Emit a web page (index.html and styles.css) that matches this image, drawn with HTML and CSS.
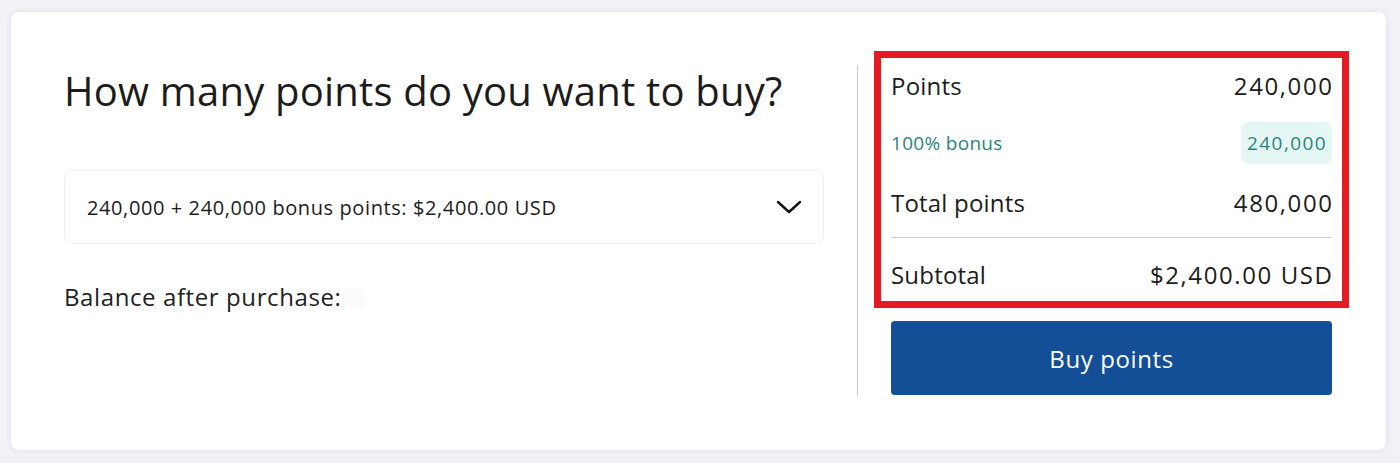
FILE: index.html
```html
<!DOCTYPE html>
<html lang="en">
<head>
<meta charset="utf-8">
<title>Buy points</title>
<link rel="stylesheet" href="styles.css">
</head>
<body>
<div class="page">
  <div class="card">
    <div class="left">
      <h1 class="title">How many points do you want to buy?</h1>
      <div class="select">
        <span class="select-text">240,000 + 240,000 bonus points: $2,400.00 USD</span>
        <svg class="chevron" width="26" height="16" viewBox="0 0 26 16"><path d="M2 3 L13 13 L24 3" fill="none" stroke="#111" stroke-width="2.4" stroke-linecap="round" stroke-linejoin="round"/></svg>
      </div>
      <div class="balance">Balance after purchase:<span class="redacted"></span></div>
    </div>
    <div class="divider"></div>
    <div class="right">
      <div class="highlight"></div>
      <div class="row row-points"><span>Points</span><span class="num">240,000</span></div>
      <div class="row row-bonus"><span>100% bonus</span><span class="pill">240,000</span></div>
      <div class="row row-total"><span>Total points</span><span class="num">480,000</span></div>
      <div class="rule"></div>
      <div class="row row-sub"><span>Subtotal</span><span class="num">$2,400.00 USD</span></div>
      <button class="buy">Buy points</button>
    </div>
  </div>
</div>
</body>
</html>
```

FILE: styles.css
```css
html, body {
  margin: 0;
  padding: 0;
}
body {
  background: #f1f1f6;
  font-family: "Open Sans", Lato, sans-serif;
  color: #1e1e1e;
}
.page {
  padding: 12px 14px 13px 11px;
}
.card {
  background: #fff;
  border-radius: 8px;
  height: 438px;
  box-sizing: border-box;
  padding: 53px 54px 0 53px;
  display: flex;
  box-shadow: 0 0 6px rgba(200, 200, 215, 0.35);
}
.left {
  width: 760px;
  display: flex;
  flex-direction: column;
}
.title {
  margin: 2px 0 0 0;
  font-size: 40px;
  line-height: 48px;
  letter-spacing: 0.2px;
  font-weight: 400;
  color: #1c1c1c;
}
.select {
  margin-top: 55px;
  height: 74px;
  box-sizing: border-box;
  border: 1px solid #f0f0f2;
  border-radius: 9px;
  display: flex;
  align-items: center;
  justify-content: space-between;
  padding: 0 21px 0 22px;
}
.select-text {
  font-size: 20px;
  letter-spacing: 0.6px;
  color: #1c1c1c;
}
.chevron {
  display: block;
}
.balance {
  margin-top: 39px;
  font-size: 24px;
  letter-spacing: 0.6px;
  line-height: 28px;
  color: #222;
  display: flex;
  align-items: center;
}
.redacted {
  display: inline-block;
  width: 22px;
  height: 16px;
  margin-left: 2px;
  background: #fbfbfc;
  border-radius: 4px;
}
.divider {
  width: 1px;
  background: #c9c9cc;
  margin: 0 33px;
  height: 331px;
}
.right {
  position: relative;
  width: 441px;
  display: flex;
  flex-direction: column;
}
.highlight {
  position: absolute;
  left: -17px;
  top: -14px;
  width: 475px;
  height: 257px;
  box-sizing: border-box;
  border: 7px solid #e41b23;
  pointer-events: none;
}
.row {
  display: flex;
  justify-content: space-between;
  align-items: center;
  height: 40px;
  font-size: 24px;
  letter-spacing: 0.2px;
  color: #1c1c1c;
}
.num {
  letter-spacing: 1.6px;
  margin-right: -1.6px;
}
.row-bonus {
  margin-top: 17px;
  height: 42px;
  font-size: 19px;
  letter-spacing: 0.3px;
  color: #2b8478;
}
.pill {
  background: #e4f7f4;
  border-radius: 8px;
  height: 42px;
  line-height: 42px;
  padding: 0 5px 0 6px;
  letter-spacing: 1.4px;
}
.row-total {
  margin-top: 18px;
}
.rule {
  margin-top: 15px;
  height: 1px;
  background: #c3d0d1;
}
.row-sub {
  margin-top: 16px;
}
.buy {
  margin-top: 27px;
  height: 74px;
  border: none;
  border-radius: 4px;
  background: #134e97;
  color: #fff;
  font-family: inherit;
  font-size: 24px;
  letter-spacing: 0.6px;
  padding: 0;
  cursor: pointer;
}
```
